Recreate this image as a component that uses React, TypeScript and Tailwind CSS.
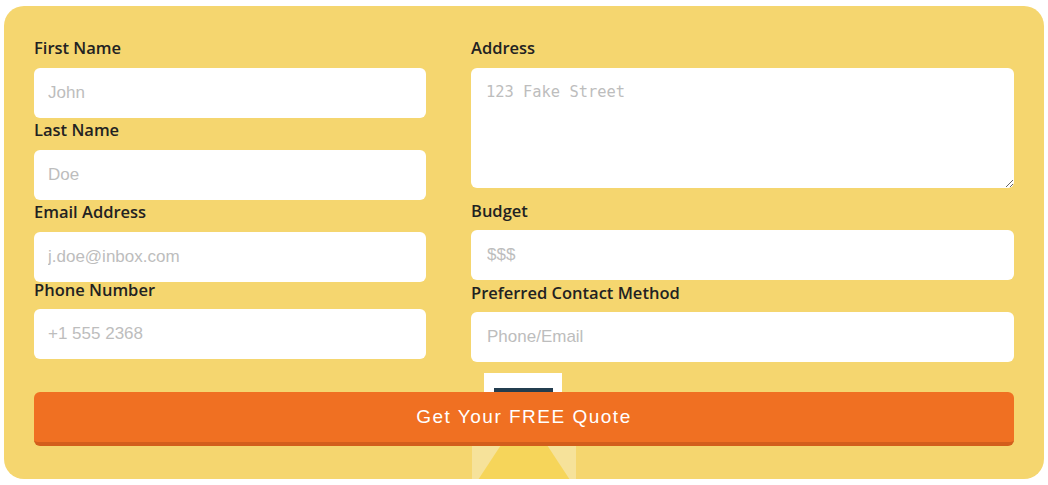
const labelCls =
  "block text-[16.5px] font-semibold leading-[24px] text-[#222] mb-[8px] [font-family:'Open_Sans',sans-serif]";
const inputCls =
  "block w-full h-[50px] rounded-[6px] bg-white text-[17px] text-[#333] outline-none placeholder:text-[#bdbdbd] [font-family:'Liberation_Sans',Arial,sans-serif]";

function Field({
  label,
  placeholder,
  labelClass = "",
  pad = "px-[14px]",
}: {
  label: string;
  placeholder: string;
  labelClass?: string;
  pad?: string;
}) {
  return (
    <div>
      <label className={`${labelCls} ${labelClass}`}>{label}</label>
      <input className={`${inputCls} ${pad}`} placeholder={placeholder} />
    </div>
  );
}

// envelope graphic peeking out behind the button
function Envelope() {
  return (
    <svg
      className="absolute left-[468px] top-[367px]"
      width="104"
      height="106"
      viewBox="0 0 104 106"
    >
      <rect x="0" y="20" width="104" height="100" rx="6" fill="#f6e29a" />
      <rect x="12" y="0" width="78" height="60" fill="#ffffff" />
      <rect x="22" y="15" width="59" height="6" fill="#233d4f" />
      <polygon points="52,37 4,110 100,110" fill="#f6d55a" />
    </svg>
  );
}

export default function App() {
  return (
    <div className="min-h-screen bg-white pt-[6px] pl-[4px]">
      <div className="relative w-[1040px] h-[473px] overflow-hidden rounded-[20px] bg-[#f5d66f] px-[30px] pt-[30px]">
        <Envelope />
        <div className="relative grid grid-cols-[392px_543px] gap-x-[45px]">
          <div>
            <Field label="First Name" placeholder="John" />
            <Field label="Last Name" placeholder="Doe" />
            <Field label="Email Address" placeholder="j.doe@inbox.com" />
            <Field
              label="Phone Number"
              placeholder="+1 555 2368"
              labelClass="-mt-[4px] !mb-[7px]"
            />
          </div>
          <div>
            <label className={labelCls}>Address</label>
            <textarea
              className="block w-full h-[120px] rounded-[6px] bg-white px-[15px] pt-[13px] text-[15.4px] text-[#333] outline-none placeholder:text-[#bdbdbd] [font-family:'DejaVu_Sans_Mono',monospace]"
              placeholder="123 Fake Street"
            />
            <div className="mt-[11px]">
              <Field label="Budget" placeholder="$$$" labelClass="!mb-[7px]" pad="px-[16px]" />
            </div>
            <div className="mt-[1px]">
              <Field
                label="Preferred Contact Method"
                placeholder="Phone/Email"
                labelClass="!mb-[7px]"
                pad="px-[16px]"
              />
            </div>
          </div>
        </div>
        <button className="relative mt-[30px] block w-full h-[54px] rounded-[6px] border-b-[4px] border-[#d35e1b] bg-[#f07022] text-[19px] tracking-[1.5px] text-white [font-family:'Liberation_Sans',Arial,sans-serif]">
          Get Your FREE Quote
        </button>
      </div>
    </div>
  );
}
